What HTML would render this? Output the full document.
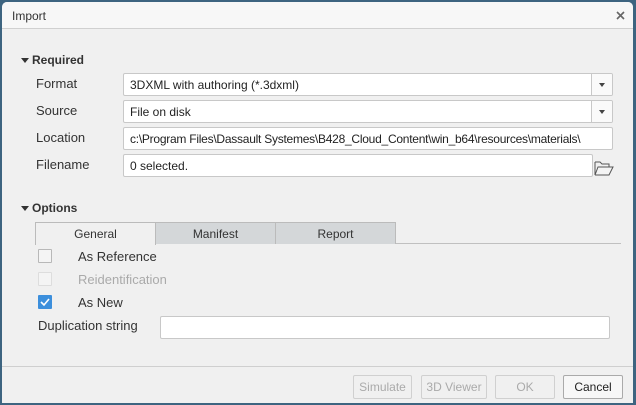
<!DOCTYPE html>
<html><head><style>
*{box-sizing:border-box;margin:0;padding:0}
body{width:636px;height:405px;background:#3d6480;font-family:"Liberation Sans",sans-serif;font-size:12px;color:#333;position:relative;overflow:hidden}
.dlg{position:absolute;left:2px;top:2px;width:631px;height:401px;background:#f0f0f0;border-radius:5px 5px 0 0;overflow:hidden}
.tb{position:absolute;left:0;top:0;width:631px;height:27px;background:#f7f7f7;border-bottom:1px solid #d0d0d0}
.a{position:absolute;white-space:nowrap}
.f{position:absolute;background:#fff;border:1px solid #c8c8c8;border-radius:2px;height:23px;padding:4px 6px;font-size:12px;color:#222;white-space:nowrap;overflow:hidden}
.dd{position:absolute;right:0;top:0;width:21px;height:21px;border-left:1px solid #c8c8c8;background:#fafafa}
.dd:after{content:"";position:absolute;left:7px;top:9px;border-left:3.5px solid transparent;border-right:3.5px solid transparent;border-top:4px solid #444}
.lbl{position:absolute;font-size:13px;color:#333}
.h{position:absolute;font-weight:bold;font-size:12px;color:#333}
.tri{position:absolute;border-left:4px solid transparent;border-right:4px solid transparent;border-top:5px solid #333}
.tab{position:absolute;top:220px;height:22px;width:121px;background:#d4d7d9;border:1px solid #bbb;border-bottom:none;text-align:center;font-size:12px;line-height:22px}
.cb{position:absolute;left:36px;width:14px;height:14px;border:1px solid #b8b8b8;background:#f4f4f4;border-radius:1px}
.btn{position:absolute;top:373px;height:24px;border:1px solid #d0d0d0;border-radius:2px;background:#f0f0f0;color:#aaa;font-size:12px;text-align:center;line-height:22px}
</style></head><body>
<div class="dlg">
<div class="tb"><span class="a" style="left:10px;top:7px;font-size:12px;color:#333">Import</span>
<svg class="a" style="left:614px;top:9px" width="9" height="9"><path d="M1 1L8 8M8 1L1 8" stroke="#666" stroke-width="1.6"/></svg></div>
<div class="tri" style="left:19px;top:56px"></div><span class="h" style="left:30px;top:51px">Required</span>
<span class="lbl" style="left:34px;top:74px">Format</span>
<span class="lbl" style="left:34px;top:101px">Source</span>
<span class="lbl" style="left:34px;top:128px">Location</span>
<span class="lbl" style="left:34px;top:155px">Filename</span>
<div class="f" style="left:121px;top:71px;width:490px">3DXML with authoring (*.3dxml)<div class="dd"></div></div>
<div class="f" style="left:121px;top:98px;width:490px">File on disk<div class="dd"></div></div>
<div class="f" style="left:121px;top:125px;width:490px;letter-spacing:-0.25px">c:\Program Files\Dassault Systemes\B428_Cloud_Content\win_b64\resources\materials\</div>
<div class="f" style="left:121px;top:152px;width:470px">0 selected.</div>
<svg class="a" style="left:592px;top:158px" width="20" height="17"><path d="M1 2H6L8 4H15V7M1 2V15L4 7H19L15 15H1" fill="#f4f4f4" stroke="#555" stroke-width="1"/></svg>
<div class="tri" style="left:19px;top:204px"></div><span class="h" style="left:30px;top:199px">Options</span>
<div class="a" style="left:153px;top:241px;width:466px;border-top:1px solid #c0c0c0"></div>
<div class="tab" style="left:33px;background:#f0f0f0;height:23px">General</div>
<div class="tab" style="left:153px">Manifest</div>
<div class="tab" style="left:273px">Report</div>
<div class="cb" style="top:247px"></div><span class="lbl" style="left:76px;top:247px">As Reference</span>
<div class="cb" style="top:270px;border-color:#ddd"></div><span class="lbl" style="left:76px;top:270px;color:#aaa">Reidentification</span>
<div class="cb" style="top:293px;background:#3c8fdc;border-color:#3c8fdc"><svg width="12" height="12" style="position:absolute;left:0;top:0"><path d="M2 6L5 9L10 3" stroke="#fff" stroke-width="1.6" fill="none"/></svg></div><span class="lbl" style="left:76px;top:293px">As New</span>
<span class="lbl" style="left:36px;top:316px">Duplication string</span>
<div class="f" style="left:158px;top:314px;width:450px"></div>
<div class="a" style="left:0;top:364px;width:631px;border-top:1px solid #cfcfcf"></div>
<div class="btn" style="left:351px;width:59px">Simulate</div>
<div class="btn" style="left:419px;width:66px">3D Viewer</div>
<div class="btn" style="left:493px;width:60px">OK</div>
<div class="btn" style="left:561px;width:60px;border-color:#aaa;color:#222;background:#f7f7f7">Cancel</div>
</div>
</body></html>
